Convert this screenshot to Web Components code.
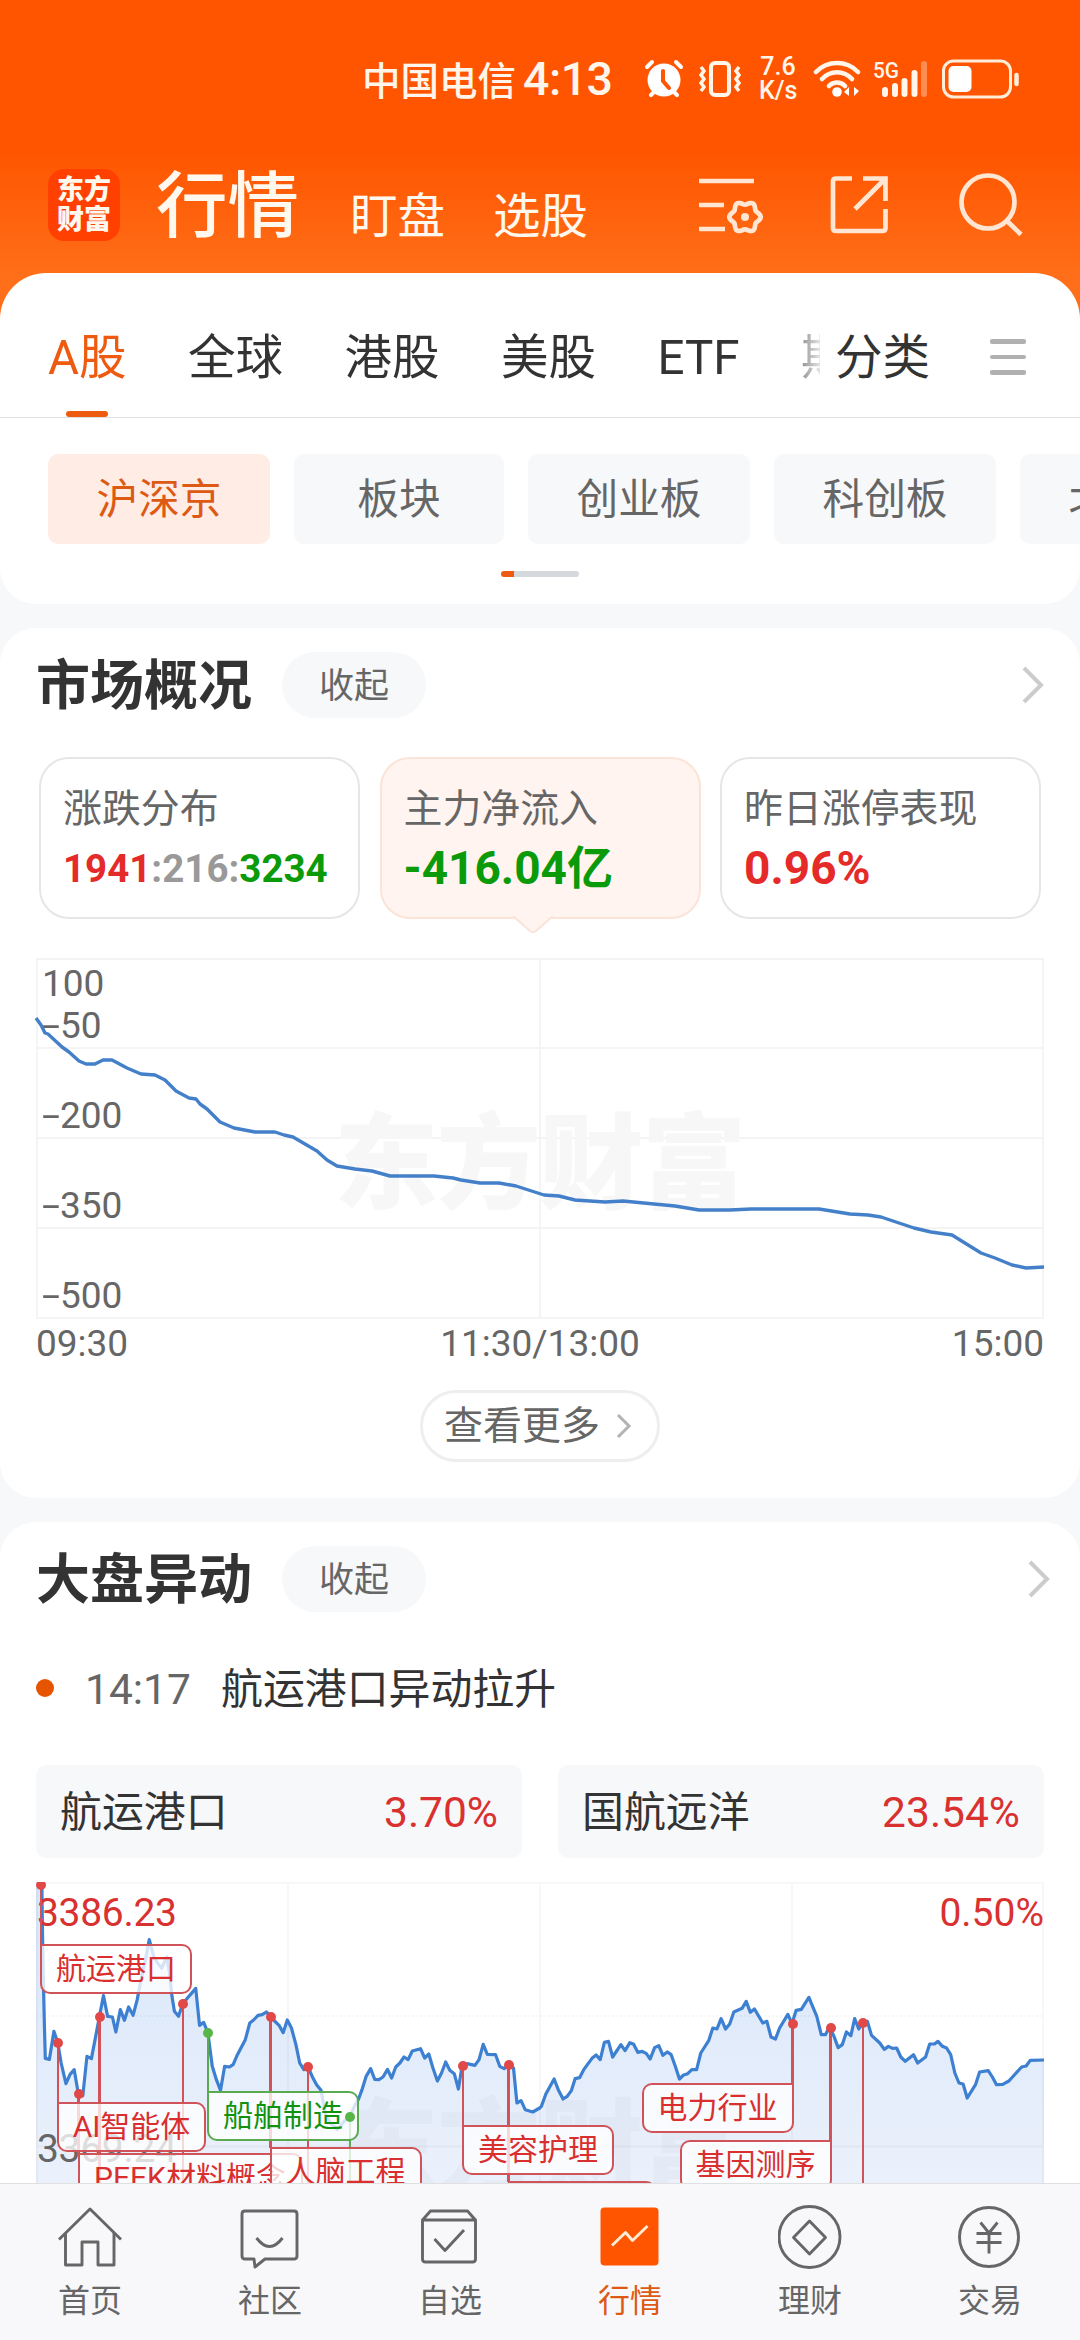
<!DOCTYPE html>
<html lang="zh-CN">
<head>
<meta charset="UTF-8">
<title>行情</title>
<style>
    html, body {
        margin: 0;
        padding: 0;
    }
    body {
        width: 1080px;
        height: 2340px;
        overflow: hidden;
        background: #f7f8fa;
        color: #333;
        font-family: Roboto, "Noto Sans CJK SC", sans-serif;
    }
</style>
</head>
<body>
<market-app></market-app>

<script>
// Status bar: carrier, clock and the system icons
class StatusBar extends HTMLElement {
    constructor() {
        super();
        this.attachShadow({ mode: "open" });
    }

    connectedCallback() {
        this.shadowRoot.innerHTML = `
            <style>
                :host {
                    display: flex;
                    box-sizing: border-box;
                    height: 140px;
                    padding: 18px 0 0 362px;
                    align-items: center;
                    color: #fff5ea;
                    font-weight: 500;
                }
                :host > * { flex: none; }
                .Carrier {
                    font-size: 38.5px;
                    white-space: nowrap;
                    width: 161px;
                    padding-bottom: 3px;
                }
                .Clock {
                    font-size: 46.5px;
                    width: 121px;
                    letter-spacing: -.5px;
                    padding-bottom: 1px;
                }
                .Speed {
                    font-size: 25px;
                    line-height: 24px;
                    text-align: center;
                    width: 38px;
                    margin: 0 16px 0 17px;
                }
                svg {
                    display: block;
                    flex: none;
                }
                .Vibrate { margin-left: 14px; }
                .Signal { margin-left: 12px; }
                .Battery { margin-left: 12px; }
            </style>
            <div class="Carrier">中国电信</div>
            <div class="Clock">4:13</div>
            <svg width="40" height="40" viewBox="0 0 40 40" fill="none" stroke="#fff" stroke-width="4" stroke-linecap="round">
                <circle cx="20" cy="21" r="16.5" fill="#fff" stroke="none"/>
                <path d="M3 8 L8 3 M37 8 L32 3 M7 36 L10 33 M33 36 L30 33"/>
                <path d="M19 12 V22 L25 29" stroke="#ff5500"/>
            </svg>
            <svg class="Vibrate" width="44" height="40" viewBox="0 0 44 40" fill="none" stroke="#fff5ea" stroke-width="4">
                <rect x="13" y="4" width="18" height="32" rx="4"/>
                <path d="M3 8 L6 12 L3 16 L6 20 L3 24 L6 28 L3 32 M41 8 L38 12 L41 16 L38 20 L41 24 L38 28 L41 32" stroke-width="3.5"/>
            </svg>
            <div class="Speed">7.6<br>K/s</div>
            <svg width="48" height="40" viewBox="0 0 48 40" fill="none" stroke="#fff5ea" stroke-width="4.5" stroke-linecap="round">
                <path d="M3 13 A29 29 0 0 1 45 13 M9 20 A20 20 0 0 1 39 20 M16 27 A11 11 0 0 1 32 27"/>
                <circle cx="24" cy="33" r="4.8" fill="#fff" stroke="none"/>
                <path d="M36 28 V37 L31 33 Z M41 37 V28 L46 32 Z" fill="#fff" stroke="none"/>
            </svg>
            <svg class="Signal" width="56" height="40" viewBox="0 0 56 40" fill="#fff5ea">
                <text x="0" y="19" font-size="22" font-weight="500" textLength="26" lengthAdjust="spacingAndGlyphs">5G</text>
                <rect x="9" y="28" width="6" height="10" rx="3"/>
                <rect x="19" y="24" width="6" height="14" rx="3"/>
                <rect x="28.500" y="19" width="6" height="19" rx="3"/>
                <rect x="38.500" y="11" width="6" height="27" rx="3"/>
                <rect x="48" y="2" width="6" height="36" rx="3" opacity=".35"/>
            </svg>
            <svg class="Battery" width="80" height="42" viewBox="0 0 80 42" fill="none" stroke="#ffecd9" stroke-width="3">
                <rect x="2.500" y="3" width="67" height="36" rx="10"/>
                <rect x="7.500" y="8" width="23" height="26" rx="5" fill="#fff" stroke="none"/>
                <path d="M75.500 17 V26" stroke-width="4.5" stroke-linecap="round"/>
            </svg>
        `;
    }
}
customElements.define("status-bar", StatusBar);

// Orange title row with logo and tool icons
class TitleBar extends HTMLElement {
    constructor() {
        super();
        this.attachShadow({ mode: "open" });
    }

    // outline of the settings gear, six soft teeth
    gearPath(cx, cy) {
        let d = "";
        for (let i = 0; i <= 72; i++) {
            const a = i / 72 * Math.PI * 2;
            const r = 14 + 1.7 * Math.cos(6 * a);
            d += (i ? "L" : "M") + (cx + r * Math.cos(a)).toFixed(1) + " " + (cy + r * Math.sin(a)).toFixed(1);
        }
        return d + "Z";
    }

    connectedCallback() {
        this.shadowRoot.innerHTML = `
            <style>
                :host {
                    display: flex;
                    box-sizing: border-box;
                    height: 133px;
                    padding: 29px 55px 0 48px;
                    align-items: flex-start;
                    color: #fff8ee;
                }
                .Logo {
                    width: 72px;
                    height: 72px;
                    border-radius: 16px;
                    background: #ff4000;
                    box-sizing: border-box;
                    padding-top: 6px;
                    text-align: center;
                    font-size: 27px;
                    line-height: 30px;
                    font-weight: 900;
                }
                .Name {
                    margin-left: 36px;
                    font-size: 71.5px;
                    line-height: 75px;
                    font-weight: 500;
                    width: 194px;
                }
                .Link {
                    font-size: 47.5px;
                    line-height: 55px;
                    padding-top: 21px;
                    width: 143px;
                    white-space: nowrap;
                }
                .Tools {
                    display: flex;
                    gap: 64px;
                    margin-left: auto;
                    padding-top: 2px;
                }
                svg { display: block; }
            </style>
            <div class="Logo">东方<br>财富</div>
            <div class="Name">行情</div>
            <div class="Link">盯盘</div>
            <div class="Link">选股</div>
            <div class="Tools">
                <svg width="66" height="66" viewBox="0 0 66 66" fill="none" stroke="#ffe6d3" stroke-width="4.7">
                    <path d="M0 10 H55 M0 34 H25 M0 58 H26"/>
                    <path d="${this.gearPath(46, 46)}"/>
                    <circle cx="46" cy="46" r="4" fill="#ffe6d3" stroke="none"/>
                </svg>
                <svg width="66" height="66" viewBox="0 0 66 66" fill="none" stroke="#ffe6d3" stroke-width="4.7">
                    <path d="M23 7.500 H7 Q4 7.500 4 10.500 V57 Q4 60 7 60 H53.500 Q56.500 60 56.500 57 V38"/>
                    <path d="M34 7.500 H56.500 V30 M55 9 L26 38"/>
                </svg>
                <svg width="66" height="66" viewBox="0 0 66 66" fill="none" stroke="#ffe6d3" stroke-width="4.7">
                    <circle cx="29" cy="31" r="26.500"/>
                    <path d="M48 50 L62 63.500"/>
                </svg>
            </div>
        `;
    }
}
customElements.define("title-bar", TitleBar);

// First level tabs and the chips below them
class MarketNav extends HTMLElement {
    constructor() {
        super();
        this.attachShadow({ mode: "open" });
        this.tabs = ["A股", "全球", "港股", "美股", "ETF", "期货"];
        this.chips = ["沪深京", "板块", "创业板", "科创板", "北交所"];
    }

    connectedCallback() {
        this.shadowRoot.innerHTML = `
            <style>
                :host {
                    display: block;
                    height: 331px;
                    background: linear-gradient(#ff6e18 50%, #f7f8fa 50%);
                }
                .Card {
                    height: 331px;
                    background: #fff;
                    border-radius: 46px 46px 36px 36px;
                    overflow: hidden;
                }
                .TabRow {
                    display: flex;
                    box-sizing: border-box;
                    height: 145px;
                    border-bottom: 1.5px solid #e0e0e0;
                    font-size: 47.5px;
                    line-height: 62px;
                }
                .Tabs {
                    display: flex;
                    gap: 61.5px;
                    width: 772px;
                    padding-left: 48px;
                    overflow: hidden;
                    -webkit-mask: linear-gradient(90deg, #000 780px, transparent 826px);
                    mask: linear-gradient(90deg, #000 780px, transparent 826px);
                }
                .Tab {
                    flex: none;
                    display: flex;
                    flex-direction: column;
                    align-items: center;
                    justify-content: space-between;
                    height: 144px;
                    padding-top: 54px;
                    box-sizing: border-box;
                }
                .Active { color: #ee5a10; }
                .Active::after {
                    content: "";
                    width: 42px;
                    height: 6px;
                    border-radius: 3px;
                    background: #ee5a10;
                }
                .Sort {
                    padding: 54px 0 0 15px;
                }
                .Menu {
                    display: grid;
                    gap: 11px;
                    align-content: start;
                    padding: 66px 0 0 60px;
                }
                .Menu i {
                    width: 36px;
                    height: 4.5px;
                    border-radius: 2px;
                    background: #b0b0b0;
                }
                .Chips {
                    display: flex;
                    gap: 24px;
                    padding: 36px 0 0 48px;
                }
                .Chip {
                    flex: none;
                    box-sizing: border-box;
                    height: 90px;
                    line-height: 92px;
                    padding: 0 48px;
                    width: 222px;
                    text-align: center;
                    white-space: nowrap;
                    border-radius: 10px;
                    background: #f7f8fa;
                    color: #666;
                    font-size: 41.7px;
                }
                .Chip:nth-child(2) { width: 210px; }
                .Chip.On {
                    background: #ffede5;
                    color: #dc5a14;
                }
                .Pager {
                    width: 78px;
                    height: 6px;
                    margin: 27px auto 0;
                    border-radius: 3px;
                    background: linear-gradient(90deg, #ee5a10 13px, #d5d8dd 13px);
                }
            </style>
            <div class="Card">
                <div class="TabRow">
                    <div class="Tabs">
                        ${this.tabs.map((t, i) => `<div class="Tab ${i == 0 ? "Active" : ""}">${t}</div>`).join("")}
                    </div>
                    <div class="Sort">分类</div>
                    <div class="Menu"><i></i><i></i><i></i></div>
                </div>
                <div class="Chips">
                    ${this.chips.map((c, i) => `<div class="Chip ${i == 0 ? "On" : ""}">${c}</div>`).join("")}
                </div>
                <div class="Pager"></div>
            </div>
        `;
    }
}
customElements.define("market-nav", MarketNav);

// White rounded section with title, collapse pill and arrow
class SectionCard extends HTMLElement {
    constructor() {
        super();
        this.attachShadow({ mode: "open" });
    }

    connectedCallback() {
        this.shadowRoot.innerHTML = `
            <style>
                :host {
                    display: block;
                    box-sizing: border-box;
                    margin-top: 24px;
                    padding: 24px 36px 0;
                    background: #fff;
                    border-radius: 36px;
                }
                .Head {
                    display: flex;
                    align-items: center;
                    height: 66px;
                }
                .Title {
                    font-size: 54px;
                    line-height: 66px;
                    padding-top: 4px;
                    font-weight: 700;
                    width: 246px;
                    white-space: nowrap;
                }
                .Pill {
                    width: 144px;
                    height: 66px;
                    line-height: 69px;
                    border-radius: 33px;
                    background: #f7f8fa;
                    color: #666;
                    font-size: 35px;
                    text-align: center;
                }
                svg {
                    display: block;
                    margin-left: auto;
                    margin-right: var(--arrow-shift, 0);
                }
            </style>
            <div class="Head">
                <div class="Title">${this.getAttribute("heading")}</div>
                <div class="Pill">收起</div>
                <svg width="22" height="38" viewBox="0 0 22 38" fill="none" stroke="#ccc" stroke-width="4">
                    <path d="M2 2 L19 19 L2 36"/>
                </svg>
            </div>
            <slot></slot>
        `;
    }
}
customElements.define("section-card", SectionCard);

class StatCard extends HTMLElement {
    constructor() {
        super();
        this.attachShadow({ mode: "open" });
    }

    connectedCallback() {
        this.shadowRoot.innerHTML = `
            <style>
                :host {
                    display: block;
                    position: relative;
                    box-sizing: border-box;
                    height: 162px;
                    padding: 24px 0 0 22px;
                    border: 2px solid #e6e6e6;
                    border-radius: 30px;
                    background: #fff;
                    white-space: nowrap;
                }
                :host([selected]) {
                    background: #fff4ef;
                    border-color: #fbe3d7;
                }
                .Label {
                    font-size: 38.9px;
                    line-height: 52px;
                    color: #666;
                }
                .Value {
                    font-size: var(--value-size, 46px);
                    line-height: 61px;
                    font-weight: 700;
                    margin-top: 3px;
                }
                svg {
                    display: none;
                    position: absolute;
                    left: 129px;
                    bottom: -17px;
                }
                :host([selected]) svg { display: block; }
            </style>
            <div class="Label">${this.getAttribute("label")}</div>
            <div class="Value"><slot></slot></div>
            <svg width="44" height="18" viewBox="0 0 44 18">
                <path d="M2 0 L19 15 Q22 17 25 15 L42 0" fill="#fff4ef" stroke="#fbe3d7" stroke-width="2"/>
            </svg>
        `;
    }
}
customElements.define("stat-card", StatCard);

// Net inflow line chart
class FlowChart extends HTMLElement {
    constructor() {
        super();
        this.attachShadow({ mode: "open" });
        this.points = "0,60 5,67 9,75 12,76 26,89 33,94 43,103 50,106 59,106 67,102 76,102 91,110 105,116 119,117 129,122 140,133 153,140 160,141 164,146 171,151 184,164 198,170 219,174 239,174 248,177 257,179 281,193 291,202 301,208 319,211 336,213 354,218 377,218 398,218 417,220 425,222 444,225 463,225 480,228 508,237 523,238 539,242 569,244 587,243 618,246 639,248 663,252 694,252 715,251 783,251 814,256 832,257 845,259 878,270 895,274 916,277 945,295 959,300 976,307 990,310 1008,309";
    }

    connectedCallback() {
        this.shadowRoot.innerHTML = `
            <style>
                :host {
                    display: block;
                    margin-top: 39px;
                    color: #666;
                    font-size: 37px;
                }
                svg {
                    display: block;
                    overflow: visible;
                }
                .Times {
                    display: grid;
                    grid-template-columns: 1fr auto 1fr;
                    line-height: 51px;
                }
                .Times span:last-child { text-align: right; }
            </style>
            <svg width="1008" height="360" viewBox="0 0 1008 360" fill="#666">
                <g fill="none" stroke="#f4f4f5" stroke-width="2">
                    <rect x="1" y="1" width="1006" height="359"/>
                    <path d="M504 1 V360 M0 90 H1008 M0 180 H1008 M0 270 H1008"/>
                </g>
                <text x="298" y="243" font-size="104" font-weight="900" fill="#f7f7f8" textLength="412">东方财富</text>
                <polyline points="${this.points}" fill="none" stroke="#4380c9" stroke-width="3.4" stroke-linejoin="round"/>
                <text x="6" y="38">100</text>
                ${[50, 200, 350, 500].map((v, i) => `<text x="6" y="${80 + i * 90}"><tspan textLength="18" lengthAdjust="spacingAndGlyphs">-</tspan>${v}</text>`).join("")}
            </svg>
            <div class="Times"><span>09:30</span><span>11:30/13:00</span><span>15:00</span></div>
        `;
    }
}
customElements.define("flow-chart", FlowChart);

class MoreButton extends HTMLElement {
    constructor() {
        super();
        this.attachShadow({ mode: "open" });
    }

    connectedCallback() {
        this.shadowRoot.innerHTML = `
            <style>
                :host {
                    display: flex;
                    box-sizing: border-box;
                    align-items: center;
                    width: 240px;
                    height: 72px;
                    margin: 21px auto 0;
                    padding-left: 21px;
                    border: 3px solid #eee;
                    border-radius: 36px;
                    color: #666;
                    font-size: 39px;
                    line-height: 60px;
                    white-space: nowrap;
                }
                svg { margin-left: 16px; }
            </style>
            <slot></slot>
            <svg width="16" height="26" viewBox="0 0 16 26" fill="none" stroke="#b3b3b3" stroke-width="3">
                <path d="M2 2 L13 13 L2 24"/>
            </svg>
        `;
    }
}
customElements.define("more-button", MoreButton);

class NewsLine extends HTMLElement {
    constructor() {
        super();
        this.attachShadow({ mode: "open" });
    }

    connectedCallback() {
        this.shadowRoot.innerHTML = `
            <style>
                :host {
                    display: flex;
                    align-items: center;
                    height: 60px;
                    margin-top: 48px;
                    font-size: 41.9px;
                    line-height: 58px;
                }
                i {
                    width: 18px;
                    height: 18px;
                    border-radius: 50%;
                    background: #e65400;
                    margin-bottom: 4px;
                }
                .Time {
                    width: 136px;
                    margin-left: 31px;
                    font-size: 42.5px;
                    color: #666;
                }
            </style>
            <i></i>
            <div class="Time">${this.getAttribute("time")}</div>
            <slot></slot>
        `;
    }
}
customElements.define("news-line", NewsLine);

class QuoteBox extends HTMLElement {
    constructor() {
        super();
        this.attachShadow({ mode: "open" });
    }

    connectedCallback() {
        this.shadowRoot.innerHTML = `
            <style>
                :host {
                    display: flex;
                    align-items: center;
                    justify-content: space-between;
                    height: 93px;
                    padding: 2px 24px 0;
                    box-sizing: border-box;
                    border-radius: 10px;
                    background: #f7f8fa;
                    font-size: 41.9px;
                    line-height: 58px;
                }
                .Rate {
                    color: #d93030;
                    font-size: 42.5px;
                }
            </style>
            <slot></slot>
            <div class="Rate">${this.getAttribute("rate")}</div>
        `;
    }
}
customElements.define("quote-box", QuoteBox);

// Index chart with the sector flags hanging on it
class MoveChart extends HTMLElement {
    constructor() {
        super();
        this.attachShadow({ mode: "open" });
        this.line = "119,75 122,75 124,230 126,340 129,480 132,596 144,599 150,560 157,515 168,548 178,610 192,672 204,644 216,630 228,703 241,708 253,590 266,597 289,472 301,408 313,470 327,472 337,517 350,450 362,482 374,442 387,467 399,420 410,360 423,300 434,240 447,290 458,310 470,325 485,292 493,340 500,410 507,455 519,470 531,433 545,415 556,402 569,386 580,497 592,488 604,518 617,620 629,660 641,692 653,620 667,622 678,614 690,585 713,540 726,490 737,481 750,467 762,465 774,457 786,469 798,484 811,497 823,519 835,481 847,505 860,555 871,610 883,630 895,622 908,652 920,675 933,692 945,760 960,790 980,810 1000,785 1016,772 1030,740 1042,718 1052,690 1064,650 1077,627 1089,659 1101,660 1113,652 1126,629 1138,655 1150,622 1162,610 1174,592 1186,600 1198,574 1222,567 1234,595 1246,583 1258,625 1271,664 1283,640 1295,607 1307,632 1320,642 1332,688 1343,617 1357,612 1380,617 1392,600 1404,554 1416,584 1440,585 1452,620 1465,627 1477,614 1492,625 1502,730 1514,723 1526,750 1548,757 1568,745 "
            + "1573,740 1586,703 1610,658 1622,690 1636,718 1648,710 1660,693 1671,657 1684,654 1696,630 1720,596 1732,586 1744,600 1756,548 1768,545 1780,592 1804,555 1816,573 1830,549 1841,554 1853,578 1866,575 1878,582 1889,598 1902,564 1914,558 1926,587 1939,577 1950,585 1962,620 1974,658 1986,646 1998,642 2010,630 2024,630 2036,580 2059,543 2071,505 2083,508 2095,477 2108,508 2120,493 2132,457 2156,446 2168,425 2180,458 2192,448 2216,490 2228,485 2240,532 2253,538 2265,505 2289,464 2301,492 2313,452 2328,449 2350,413 2373,470 2386,525 2398,525 2410,502 2423,530 2435,564 2447,555 2459,517 2472,528 2483,477 2495,508 2507,488 2520,485 2532,527 2556,550 2569,569 2581,560 2593,566 2605,565 2617,592 2630,605 2654,585 2666,610 2689,592 2701,553 2715,553 2725,545 2738,560 2750,565 2762,585 2774,640 2786,670 2798,673 2810,715 2834,675 2846,637 2871,633 2883,652 2895,675 2913,674 2931,664 2968,622 2981,619 2993,602 3033,601";
        // x, y of the dot, top of the flag, its text, width and side
        this.flags = [
            { x: 63.5, y: 135, top: 310 },
            { x: 147, y: 122, top: 310 },
            { x: 272, y: 185, top: 310 },
            { x: 827, y: 141, top: 310 },
            { x: 42.5, y: 212, top: 272, text: "PEEK材料概念", w: 225 },
            { x: 22, y: 161, top: 221, text: "AI智能体", w: 149 },
            { x: 5, y: 3, top: 63, text: "航运港口", w: 152 },
            { x: 234.5, y: 134.5, top: 266, text: "人脑工程", w: 152 },
            { x: 172, y: 151, top: 210, text: "船舶制造", w: 152, green: true },
            { x: 314, y: 235, top: 310, green: true },
            { x: 472.5, y: 182.5, top: 300, text: "", w: 148 },
            { x: 427, y: 184, top: 244, text: "美容护理", w: 152 },
            { x: 756.5, y: 142, top: 202, text: "电力行业", w: 152, left: true },
            { x: 794.5, y: 145.5, top: 258.5, text: "基因测序", w: 152, left: true }
        ];
    }

    stem(f) {
        const c = f.green ? "Green" : "Red";
        return `<i class="Stem ${c}" style="left:${f.x - 1.25}px;top:${f.y}px;height:${f.top - f.y}px"></i>`;
    }

    flag(f) {
        if (f.text === undefined) return "";
        const c = f.green ? "Green" : "Red";
        const x = f.left ? f.x - f.w + 1 : f.x - 1;
        return `<div class="Flag ${c} ${f.left ? "Left" : ""}" style="left:${x}px;top:${f.top - 1}px;width:${f.w}px">${f.text}</div>`;
    }

    dot(f) {
        return `<i class="Dot ${f.green ? "Green" : "Red"}" style="left:${f.x - 5}px;top:${f.y - 5}px"></i>`;
    }

    connectedCallback() {
        this.shadowRoot.innerHTML = `
            <style>
                :host {
                    display: block;
                    position: relative;
                    height: 301px;
                    margin-top: 24px;
                    overflow: hidden;
                }
                svg {
                    display: block;
                    position: absolute;
                    left: 0;
                    top: 0;
                }
                i, .Flag { position: absolute; box-sizing: border-box; }
                .Stem { width: 2.5px; background: var(--c); }
                .Dot {
                    width: 10px;
                    height: 10px;
                    border-radius: 50%;
                    background: var(--dot);
                }
                .Flag {
                    height: 50px;
                    border: 2px solid var(--c);
                    border-radius: 0 10px 10px 10px;
                    background: rgba(255, 255, 255, .78);
                    color: var(--text);
                    font-size: 30px;
                    line-height: 45px;
                    text-align: center;
                    white-space: nowrap;
                }
                .Left { border-radius: 10px 0 10px 10px; }
                .Red { --c: #cf5358; --dot: #e14848; --text: #d92f2f; }
                .Green { --c: #5aaa50; --dot: #58b548; --text: #129212; }
            </style>
            <svg width="1008" height="301" viewBox="105 67 2928 903" preserveAspectRatio="none">
                <defs>
                    <linearGradient id="fill" x1="0" y1="0" x2="0" y2="1">
                        <stop offset="0" stop-color="#4a90e8" stop-opacity=".22"/>
                        <stop offset="1" stop-color="#4a80e0" stop-opacity=".11"/>
                    </linearGradient>
                </defs>
                <path d="M105,970 L105,75 L${this.line} L3033,970 Z" fill="url(#fill)"/>
            </svg>
            <svg width="1008" height="301" viewBox="0 0 1008 301">
                <g fill="none" stroke="#000" stroke-opacity=".03" stroke-width="2">
                    <path d="M0 1 H1008 M1 1 V301 M252 3 V301 M504 3 V301 M756 3 V301 M1007 1 V301 M0 264.500 H1008"/>
                    <path d="M0 134 H1008" stroke-dasharray="2 2"/>
                </g>
                <text x="298" y="304" font-size="104" font-weight="900" fill="#000" fill-opacity=".025" textLength="412">东方财富</text>
            </svg>
            <svg width="1008" height="301" viewBox="105 67 2928 903" preserveAspectRatio="none">
                <polyline points="${this.line}" fill="none" stroke="#3d7fd0" stroke-width="3.2" stroke-linejoin="round" vector-effect="non-scaling-stroke"/>
            </svg>
            <svg width="1008" height="301" viewBox="0 0 1008 301" font-size="39">
                <text x="1" y="43.500" fill="#d93030" textLength="140">3386.23</text>
                <text x="1008" y="43.500" fill="#d93030" text-anchor="end">0.50%</text>
                <text x="1" y="280" fill="#666" textLength="140">3369.24</text>
            </svg>
            ${this.flags.map(f => this.stem(f)).join("")}
            ${this.flags.map(f => this.flag(f)).join("")}
            ${this.flags.map(f => this.dot(f)).join("")}
        `;
    }
}
customElements.define("move-chart", MoveChart);

// Bottom navigation
class TabBar extends HTMLElement {
    constructor() {
        super();
        this.attachShadow({ mode: "open" });
        this.items = [
            { name: "首页", icon: `<path d="M1 34.500 L32 4 L63 34.500"/><path d="M7.500 28 V60 H24 V37 H40 V60 H56 V28"/>` },
            { name: "社区", icon: `<path d="M7 6 H56 Q59 6 59 9 V51 Q59 54 56 54 H27 L17 62 L16 54 H7 Q4 54 4 51 V9 Q4 6 7 6 Z"/><path d="M18.500 33 Q31.500 50 44.500 33"/>` },
            { name: "自选", icon: `<path d="M4.500 15 H57.500 V54 Q57.500 57 54.500 57 H7.500 Q4.500 57 4.500 54 Z L12.500 6 H49.500 L57.500 15"/><path d="M16.500 34 L27 45.500 L46 25"/>` },
            { name: "行情", on: true, icon: `<rect x="2.500" y="2.500" width="58" height="58" rx="4" fill="#ff5500" stroke="none"/><path d="M14 40.500 L27.500 27.500 L34.500 35.500 L49.500 21" stroke="#ffecd6"/>` },
            { name: "理财", icon: `<circle cx="31.500" cy="32" r="30.500"/><path d="M31.500 16 L47.500 32.500 L31.500 49 L15.500 32.500 Z"/>` },
            { name: "交易", icon: `<circle cx="31" cy="32" r="29.500"/><path d="M22.500 17.500 L31 28 L39.500 17.500 M31 28 V48.500 M18.500 28.500 H43.500 M18.500 37.500 H43.500"/>` }
        ];
    }

    connectedCallback() {
        this.shadowRoot.innerHTML = `
            <style>
                :host {
                    display: grid;
                    grid-template-columns: repeat(6, 1fr);
                    box-sizing: border-box;
                    height: 157px;
                    border-top: 1.5px solid #e0e0e0;
                    background: #f8f8fa;
                    color: #666;
                    font-size: 32px;
                    line-height: 44px;
                }
                .Item {
                    display: flex;
                    flex-direction: column;
                    align-items: center;
                    padding-top: 21px;
                }
                .On { color: #dc5a14; }
                svg { margin-bottom: 10px; }
            </style>
            ${this.items.map(it => `
                <div class="Item ${it.on ? "On" : ""}">
                    <svg width="64" height="64" viewBox="0 0 64 64" fill="none" stroke="#666" stroke-width="2.9" stroke-linejoin="round">${it.icon}</svg>
                    <span>${it.name}</span>
                </div>`).join("")}
        `;
    }
}
customElements.define("tab-bar", TabBar);

class MarketApp extends HTMLElement {
    constructor() {
        super();
        this.attachShadow({ mode: "open" });
    }

    connectedCallback() {
        this.shadowRoot.innerHTML = `
            <style>
                :host {
                    display: flex;
                    flex-direction: column;
                    height: 2340px;
                }
                .Top {
                    background: linear-gradient(#ff5500 150px, #ff6e18 273px);
                }
                .Body {
                    flex: 1;
                    min-height: 0;
                    overflow: hidden;
                }
                .Overview { height: 870px; }
                .Moves {
                    height: 700px;
                    --arrow-shift: -6px;
                }
                .Stats {
                    display: grid;
                    grid-template-columns: repeat(3, 321px);
                    gap: 19.5px;
                    margin: 39px 0 0 3px;
                }
                .Small { --value-size: 38.5px; }
                .Quotes {
                    display: grid;
                    grid-template-columns: 1fr 1fr;
                    gap: 36px;
                    margin-top: 45px;
                }
                .Up { color: #e52a2a; }
                .Flat { color: #999; }
                .Down { color: #0a9a0a; }
            </style>
            <div class="Top">
                <status-bar></status-bar>
                <title-bar></title-bar>
            </div>
            <div class="Body">
                <market-nav></market-nav>
                <section-card class="Overview" heading="市场概况">
                    <div class="Stats">
                        <stat-card class="Small" label="涨跌分布"><span class="Up">1941</span><span class="Flat">:216:</span><span class="Down">3234</span></stat-card>
                        <stat-card selected label="主力净流入"><span class="Down">-416.04亿</span></stat-card>
                        <stat-card label="昨日涨停表现"><span class="Up">0.96%</span></stat-card>
                    </div>
                    <flow-chart></flow-chart>
                    <more-button>查看更多</more-button>
                </section-card>
                <section-card class="Moves" heading="大盘异动">
                    <news-line time="14:17">航运港口异动拉升</news-line>
                    <div class="Quotes">
                        <quote-box rate="3.70%">航运港口</quote-box>
                        <quote-box rate="23.54%">国航远洋</quote-box>
                    </div>
                    <move-chart></move-chart>
                </section-card>
            </div>
            <tab-bar></tab-bar>
        `;
    }
}
customElements.define("market-app", MarketApp);
</script>
</body>
</html>
